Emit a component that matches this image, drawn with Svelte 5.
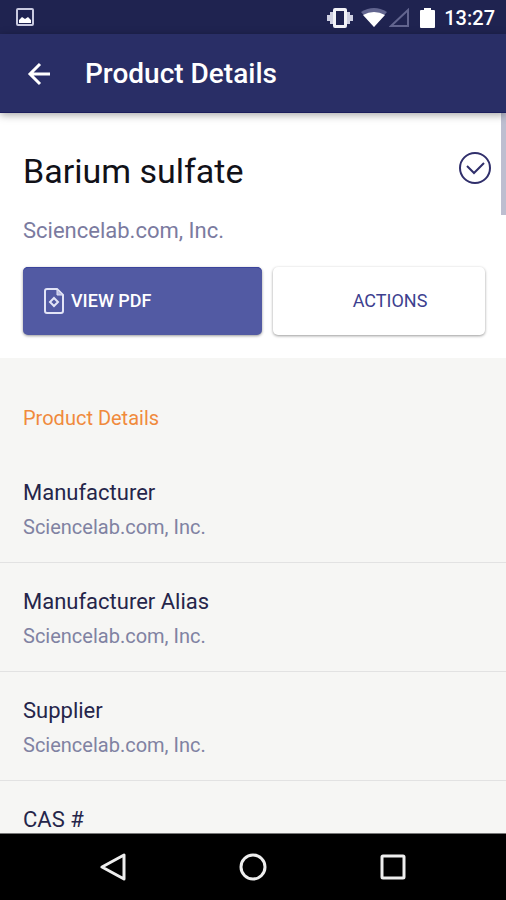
<script>
  const company = 'Sciencelab.com, Inc.';
  const details = [
    { label: 'Manufacturer', value: company },
    { label: 'Manufacturer Alias', value: company },
    { label: 'Supplier', value: company },
    { label: 'CAS #', value: '' }
  ];
</script>

<div class="screen">
  <div class="status">
    <svg width="18" height="18" viewBox="0 0 18 18" aria-hidden="true">
      <rect x="1" y="1" width="16" height="16" rx="1" fill="none" stroke="#c9cae0" stroke-width="2" />
      <path d="M3 15v-3l3-3 3 2 3-2 3 3v3z" fill="#fff" />
    </svg>
    <div class="indicators">
      <svg class="vibrate" width="26" height="20" viewBox="0 0 26 20" aria-hidden="true">
        <path fill-rule="evenodd" d="M8 0h10a2 2 0 0 1 2 2v16a2 2 0 0 1-2 2H8a2 2 0 0 1-2-2V2a2 2 0 0 1 2-2zM9 3v14h8V3z" fill="#f2f2f7" />
        <path d="M3 4h3v12H3zM0 7h3v6H0zM20 4h3v12h-3zM23 7h3v6h-3z" fill="#cfd0e2" />
      </svg>
      <svg class="wifi" width="26" height="20" viewBox="0 0 26 20" aria-hidden="true">
        <path d="M13 19 0 4Q13-4 26 4z" fill="#62658f" />
        <path d="M13 19 2 7q11-6 22 0z" fill="#fff" />
      </svg>
      <svg class="signal" width="20" height="20" viewBox="0 0 20 20" aria-hidden="true">
        <path d="M2 18 19 2v16z" fill="none" stroke="#62658f" stroke-width="2" />
      </svg>
      <svg class="battery" width="15" height="20" viewBox="0 0 15 20" aria-hidden="true">
        <path d="M4 0h7v2h3a1 1 0 0 1 1 1v16a1 1 0 0 1-1 1H1a1 1 0 0 1-1-1V3a1 1 0 0 1 1-1h3z" fill="#fff" />
      </svg>
      <time>13:27</time>
    </div>
  </div>

  <header class="appbar">
    <button class="icon-button" aria-label="Back">
      <svg width="24" height="24" viewBox="0 0 24 24" aria-hidden="true">
        <path d="M13 2 3 12l10 10M3 12h20" fill="none" stroke="#fff" stroke-width="3" />
      </svg>
    </button>
    <h1>Product Details</h1>
  </header>

  <main>
    <section class="product">
      <div class="title-row">
        <h2>Barium sulfate</h2>
        <svg width="32" height="32" viewBox="0 0 32 32" role="img" aria-label="Verified">
          <circle cx="16" cy="16" r="15" fill="none" stroke="#302f6b" stroke-width="2" />
          <path d="M8 14l7 7 10-10" fill="none" stroke="#302f6b" stroke-width="2" />
        </svg>
      </div>
      <p class="company">{company}</p>
      <div class="buttons">
        <button class="primary">
          <svg width="20" height="26" viewBox="0 0 20 26" aria-hidden="true">
            <path d="M3 1h10l6 6v16a2 2 0 0 1-2 2H3a2 2 0 0 1-2-2V3a2 2 0 0 1 2-2z" fill="none" stroke="#e2e4f6" stroke-width="2" />
            <path d="M13 1v6h6z" fill="#b9bde3" stroke="#e2e4f6" />
            <path d="M10 10l4 4-4 4-4-4z" fill="none" stroke="#e2e4f6" stroke-width="2" />
          </svg>
          <span>VIEW PDF</span>
        </button>
        <button class="secondary">ACTIONS</button>
      </div>
    </section>

    <section class="details">
      <h3>Product Details</h3>
      <dl>
        {#each details as item}
          <div class="row">
            <dt>{item.label}</dt>
            <dd>{item.value}</dd>
          </div>
        {/each}
      </dl>
    </section>
    <div class="scrollbar"></div>
  </main>

  <nav>
    <button class="icon-button" aria-label="Back">
      <svg width="28" height="28" viewBox="0 0 28 28" aria-hidden="true">
        <path d="M25 2v24L3 14z" fill="none" stroke="#eee" stroke-width="3" stroke-linejoin="round" />
      </svg>
    </button>
    <button class="icon-button" aria-label="Home">
      <svg width="28" height="28" viewBox="0 0 28 28" aria-hidden="true">
        <circle cx="14" cy="14" r="12" fill="none" stroke="#eee" stroke-width="3" />
      </svg>
    </button>
    <button class="icon-button" aria-label="Recent apps">
      <svg width="28" height="28" viewBox="0 0 28 28" aria-hidden="true">
        <rect x="3" y="3" width="22" height="22" rx="1" fill="none" stroke="#eee" stroke-width="3" />
      </svg>
    </button>
  </nav>
</div>

<style>
  .screen {
    display: flex;
    flex-direction: column;
    height: 100vh;
    font-family: Roboto, sans-serif;
    background: #f6f6f4;
    overflow: hidden;
  }
  h1, h2, h3, p, dl, dt, dd { margin: 0; font-weight: 400; }
  button {
    font-family: inherit;
    border: 0;
    margin: 0;
    cursor: pointer;
  }
  svg { display: block; flex: none; }
  .icon-button { padding: 0; background: none; }

  .status {
    flex: none;
    display: flex;
    align-items: center;
    justify-content: space-between;
    height: 34px;
    padding: 0 11px 0 16px;
    background: #1f2350;
    box-sizing: border-box;
  }
  .indicators { display: flex; align-items: center; padding-top: 2px; }
  .wifi { margin-left: 8px; }
  .signal { margin-left: 2px; }
  .battery { margin-left: 11px; }
  time {
    margin-left: 9px;
    font-size: 20px;
    line-height: 24px;
    font-weight: 500;
    color: #fff;
  }

  .appbar {
    flex: none;
    box-sizing: border-box;
    display: flex;
    align-items: center;
    gap: 34px;
    height: 79px;
    padding: 2px 27px 0;
    background: #292e66;
    border-bottom: 1px solid #1b1d5c;
    box-shadow: 0 2px 8px rgba(0, 0, 0, 0.35);
    z-index: 1;
  }
  h1 {
    font-size: 28px;
    line-height: 32px;
    font-weight: 500;
    color: #fff;
  }

  main {
    position: relative;
    flex: 1;
    min-height: 0;
    overflow: hidden;
  }
  .product { padding: 38px 21px 23px 23px; background: #fff; }
  .title-row {
    display: flex;
    align-items: center;
    justify-content: space-between;
    margin-right: -6px;
  }
  h2 { font-size: 34px; line-height: 40px; color: #111118; }
  .title-row svg { margin-bottom: 6px; }
  .company {
    margin-top: 26px;
    font-size: 22px;
    line-height: 28px;
    color: #7b7ba0;
  }
  .buttons {
    display: grid;
    grid-template-columns: 239fr 212fr;
    gap: 11px;
    margin-top: 22px;
  }
  .buttons button {
    display: flex;
    align-items: center;
    height: 68px;
    border-radius: 5px;
    font-size: 18px;
    line-height: 24px;
  }
  .primary {
    gap: 7px;
    padding: 0 21px;
    background: #525aa3;
    color: #fff;
    font-weight: 500;
    box-shadow: inset 0 1px #3b449c, 0 1px 3px rgba(0, 0, 0, 0.4);
  }
  .secondary {
    justify-content: center;
    padding: 0 0 0 22px;
    background: #fff;
    color: #3d3f8f;
    box-shadow: 0 1px 3px rgba(0, 0, 0, 0.4);
  }

  .details { padding-top: 46px; }
  h3 {
    padding: 0 23px 22px;
    font-size: 20px;
    line-height: 28px;
    color: #f08a3c;
  }
  .row {
    padding: 24px 23px 20px;
    border-bottom: 1px solid #e2e2e2;
  }
  dt { font-size: 22px; line-height: 30px; color: #25254a; }
  dd {
    margin-top: 4px;
    min-height: 30px;
    font-size: 20px;
    line-height: 30px;
    color: #8082a2;
  }
  .scrollbar {
    position: absolute;
    top: 0;
    right: 0;
    width: 5px;
    height: 102px;
    background: #bdbed0;
  }

  nav {
    flex: none;
    box-sizing: border-box;
    display: flex;
    align-items: center;
    justify-content: center;
    gap: 112px;
    height: 67px;
    border-top: 1px solid #777;
    background: #000;
  }
</style>
